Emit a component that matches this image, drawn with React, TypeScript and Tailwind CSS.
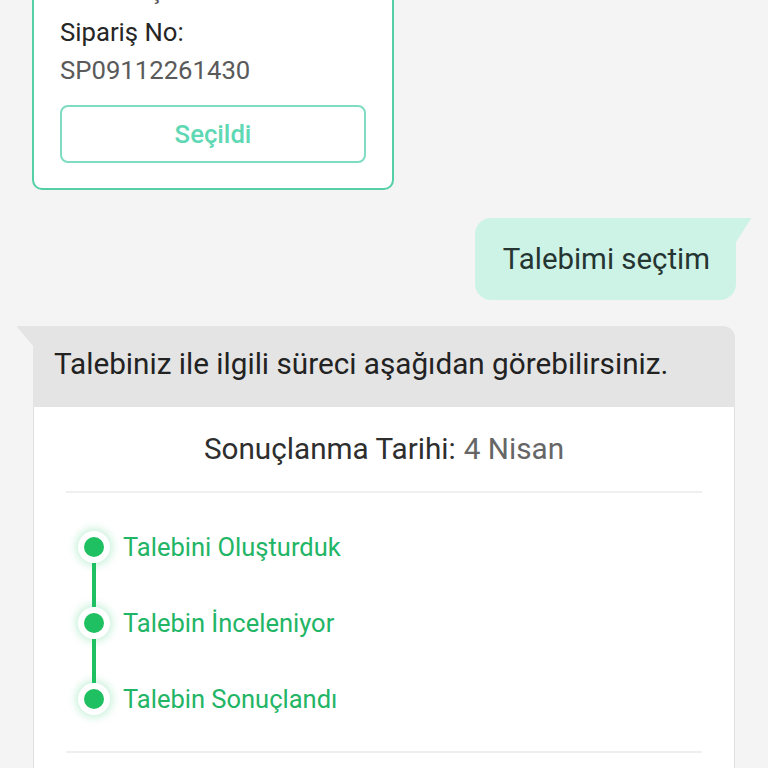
import React from "react";

const steps = ["Talebini Oluşturduk", "Talebin İnceleniyor", "Talebin Sonuçlandı"];

export default function App() {
  return (
    <div className="min-h-screen w-full overflow-hidden bg-[#f4f4f4] font-['Roboto','Noto_Sans',sans-serif]">
      {/* Order card (scrolled partially out of view) */}
      <div className="pl-8">
        <div className="-mt-[51px] w-[362px] rounded-[10px] border-2 border-[#55cfa8] bg-white px-[26px] pb-[25px] pt-[20px]">
          <div className="mb-1 text-[25.7px] leading-[38px] text-[#555]">Ödeme Şekli: Kredi Kartı</div>
          <div className="text-[25.7px] leading-[38px] text-[#262626]">Sipariş No:</div>
          <div className="text-[25.7px] leading-[38px] text-[#5a5a5a]">SP09112261430</div>
          <div className="mt-4 flex h-[58px] items-center justify-center rounded-lg border-2 border-[#7fdcc2] text-[25.7px] font-medium text-[#5fd8b4]">
            Seçildi
          </div>
        </div>
      </div>

      {/* User message */}
      <div className="mt-7 flex justify-end pr-8">
        <div className="relative flex h-[82px] items-center rounded-2xl rounded-tr-none bg-[#cdf3e7] pl-7 pr-[26px] text-[29.4px] text-[#253532]">
          Talebimi seçtim
          <svg className="absolute -right-4 top-0" width="16" height="24" viewBox="0 0 16 24">
            <path d="M0 0 H14 Q16 0 14.5 1.5 L0 24 Z" fill="#cdf3e7" />
          </svg>
        </div>
      </div>

      {/* Bot message */}
      <div className="mt-[26px] pl-[33px] pr-[33px]">
        <div className="relative flex h-[81px] items-center rounded-tr-xl bg-[#e4e4e4] pb-1 pl-[21px] text-[29.7px] text-[#222]">
          Talebiniz ile ilgili süreci aşağıdan görebilirsiniz.
          <svg className="absolute -left-[17px] top-0" width="17" height="20" viewBox="0 0 17 20">
            <path d="M17 0 H2 Q0 0 1.5 1.5 L17 20 Z" fill="#e4e4e4" />
          </svg>
        </div>
        <div className="border-x border-[#e0e0e0] bg-white px-8">
          <div className="flex h-[84px] items-center justify-center text-[29.7px]">
            <span className="text-[#2e2e2e]">Sonuçlanma Tarihi:</span>
            <span className="ml-[8px] text-[#666]">4 Nisan</span>
          </div>
          <div className="h-[2px] bg-[#efefef]" />
          <div className="flex flex-col pb-[36px] pl-3 pt-[38px]">
            {steps.map((s, i) => (
              <div key={s} className="flex gap-[13px]">
                <div className="flex w-8 flex-col items-center">
                  <div className="flex h-8 w-8 items-center justify-center rounded-full bg-white shadow-[0_0_8px_2px_rgba(40,200,110,0.28)]">
                    <div className="h-5 w-5 rounded-full bg-[#1fc061]" />
                  </div>
                  {i < steps.length - 1 && <div className="h-[44px] w-1 bg-[#1fc061]" />}
                </div>
                <div className="flex h-8 items-center text-[25.5px] text-[#22b566]">{s}</div>
              </div>
            ))}
          </div>
          <div className="h-[2px] bg-[#efefef]" />
          <div className="h-20" />
        </div>
      </div>
    </div>
  );
}
